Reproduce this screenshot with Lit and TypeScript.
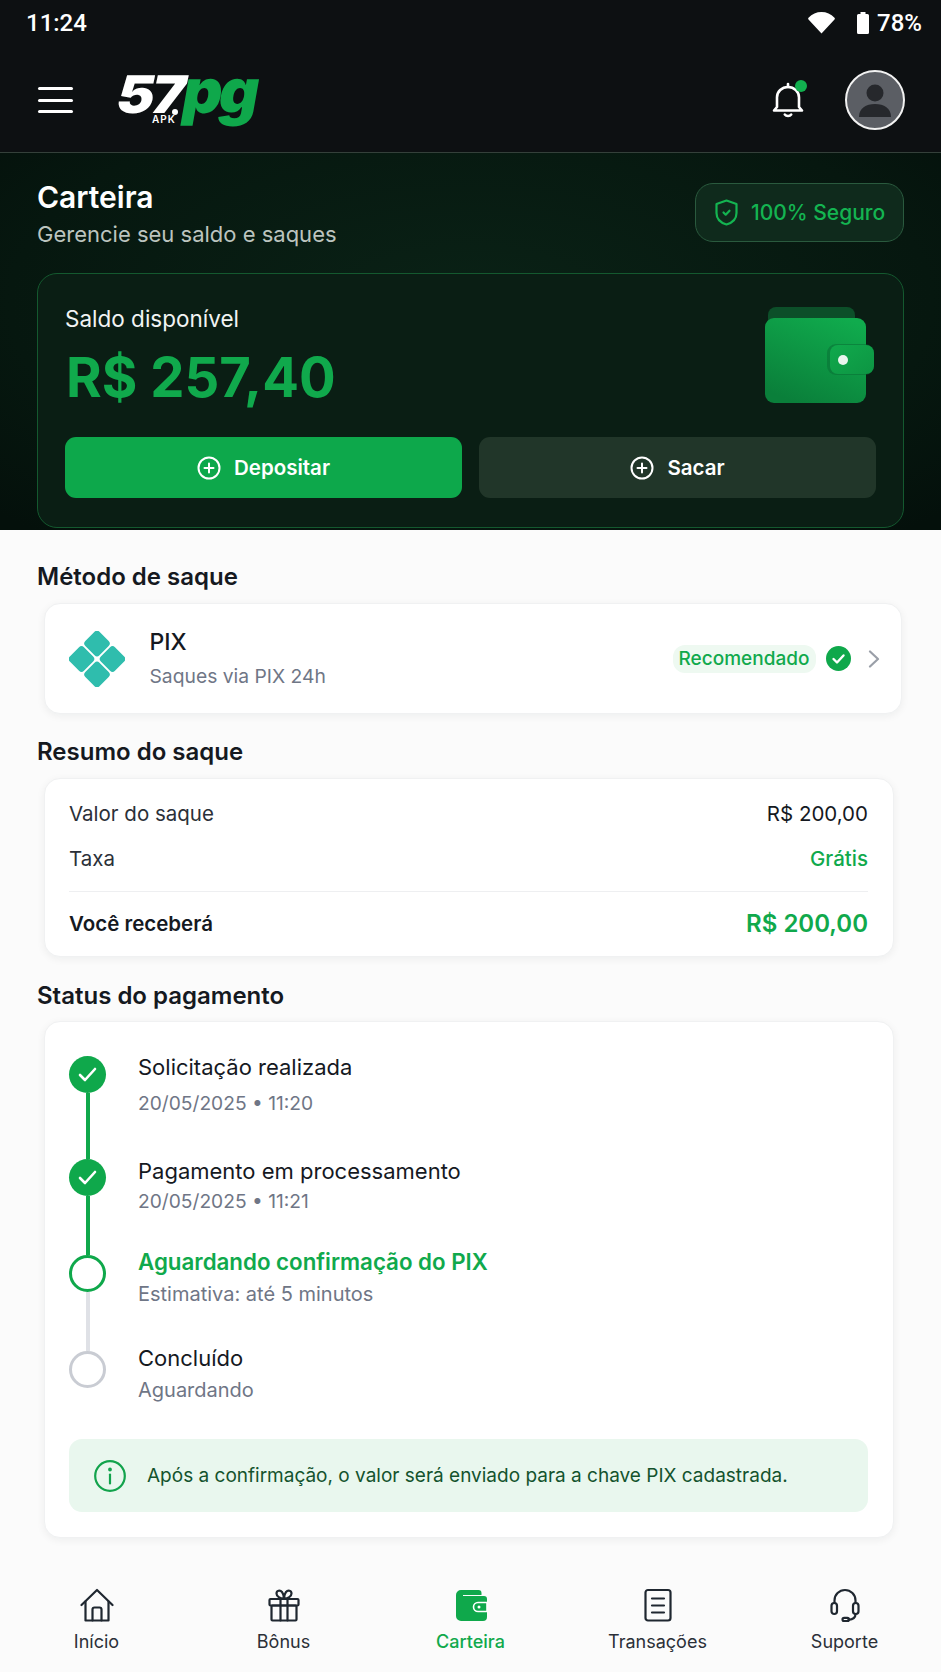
import { LitElement, html, css, svg } from "lit";
import { customElement } from "lit/decorators.js";

const steps = [
  { cls: "s1 done", title: "Solicitação realizada", sub: "20/05/2025 • 11:20" },
  { cls: "s2 done", title: "Pagamento em processamento", sub: "20/05/2025 • 11:21" },
  { cls: "s3 active", title: "Aguardando confirmação do PIX", sub: "Estimativa: até 5 minutos" },
  { cls: "s4 pending", title: "Concluído", sub: "Aguardando" },
];

const navIcons = {
  home: svg`<path d="M1.500 17 17 2l15.500 15" /><path d="M5.500 13.500V32.500h23V13.500" /><path d="M12.500 32.500V21.500a2 2 0 0 1 2-2h5a2 2 0 0 1 2 2v11" />`,
  gift: svg`<rect x="2.500" y="11" width="29" height="6.500" rx="1" /><rect x="4.500" y="17.500" width="25" height="15" rx="1" /><path d="M13.500 11v21.500M20.500 11v21.500" /><path d="M17 10.500C13 10.500 9.500 8.500 9.500 5.500 9.500 2.500 13 1.500 15 4c1.300 1.700 2 4 2 6.500ZM17 10.500c4 0 7.500-2 7.500-5 0-3-3.500-4-5.500-1.500-1.300 1.700-2 4-2 6.500Z" />`,
  doc: svg`<rect x="4.500" y="2" width="25" height="30.500" rx="2.500" /><path d="M11 10.500h12M11 17.500h12M11 24.500h12" />`,
  head: svg`<path d="M6.500 15v-2.500a10.500 10.500 0 0 1 21 0V15" /><rect x="3.500" y="15" width="5.500" height="11" rx="2.700" /><rect x="25" y="15" width="5.500" height="11" rx="2.700" /><path d="M27.500 26c0 3.500-2.500 5.500-7 5.800" /><rect x="14.500" y="29.800" width="6.500" height="3.400" rx="1.700" />`,
};

@customElement("app-root")
export class AppRoot extends LitElement {
  static styles = css`
    :host { display: block; width: 941px; height: 1672px; overflow: hidden; background: #fbfbfb; font-family: Inter, "Liberation Sans", sans-serif; color: #15191f; }
    * { box-sizing: border-box; }
    svg { display: block; flex: none; }

    .top { background: #0d1012; color: #fff; }
    .status { height: 48px; padding: 0 19px 2px 26px; display: flex; align-items: center; justify-content: space-between; font-family: Roboto, sans-serif; font-size: 24px; font-weight: 500; }
    .status-right { display: flex; align-items: center; gap: 8px; }
    .wifi { margin-right: 14px; }
    .header { height: 105px; border-bottom: 1px solid #34403a; padding: 0 36px 0 38px; display: flex; align-items: center; }
    .burger { width: 35px; display: flex; flex-direction: column; gap: 8.500px; }
    .burger i { display: block; height: 3px; border-radius: 2px; background: #fff; }
    .logo { margin-left: 39px; margin-bottom: 18px; width: 146px; height: 50px; display: flex; align-items: baseline; position: relative; font-family: Inter, sans-serif; font-weight: 900; line-height: 50px; }
    .logo-57 { display: block; width: 67px; color: #fff; font-size: 52px; letter-spacing: -3px; transform-origin: 0 100%; transform: skewX(-12deg) scaleX(1.1); }
    .logo-pg { display: block; color: #0fa84b; font-size: 62px; letter-spacing: -3.500px; transform-origin: 0 100%; transform: skewX(-10deg); }
    .logo-apk { position: absolute; left: 40px; top: 47px; font-size: 10px; font-weight: 600; letter-spacing: 1px; line-height: 12px; color: #fff; }
    .logo-mark { position: absolute; left: 60px; top: 43px; width: 6px; height: 6px; border-radius: 50%; background: #fff; }
    .spacer { flex: 1; }
    .bell { position: relative; margin-right: 41px; }
    .bell-dot { position: absolute; right: -3px; top: -2px; width: 12px; height: 12px; border-radius: 50%; background: #12b04f; }
    .avatar { width: 60px; height: 60px; border-radius: 50%; background: #5b5e64; border: 2px solid #f2f2f2; overflow: hidden; }

    .hero { height: 377px; padding: 0 37px; background: radial-gradient(ellipse 70% 80% at 50% 40%, #0a2216 0%, #06170f 70%, #04100b 100%); color: #fff; }
    .hero-head { height: 120px; padding-top: 25px; display: flex; justify-content: space-between; align-items: flex-start; }
    .hero-title { font-size: 30px; font-weight: 600; line-height: 38px; }
    .hero-sub { font-size: 22px; line-height: 28px; margin-top: 4px; color: #bcc4bf; }
    .secure { width: 209px; height: 59px; margin-top: 5px; padding-left: 19px; border: 1px solid #2a5a3e; border-radius: 18px; background: #0f2a1c; display: flex; align-items: center; gap: 13px; color: #14b451; font-size: 21px; font-weight: 500; }
    .wallet-card { height: 255px; border: 1px solid #14592f; border-radius: 20px; background: #0a1e14; padding: 31px 27px 0; }
    .balance-row { height: 132px; display: flex; justify-content: space-between; align-items: flex-start; }
    .balance-label { font-size: 22.500px; line-height: 28px; color: #f2f4f3; }
    .balance { margin-top: 12px; font-size: 54.400px; line-height: 64px; font-weight: 700; color: #10a94c; padding-left: 1px; }
    .wallet-art { margin-right: 2px; margin-top: 2px; }
    .btns { display: grid; grid-template-columns: 1fr 1fr; gap: 17px; }
    .btn { height: 61px; border-radius: 11px; display: flex; align-items: center; justify-content: center; gap: 13px; font-size: 20.500px; font-weight: 600; color: #fff; }
    .btn.primary { background: #0da84b; }
    .btn.secondary { background: #213629; }

    .sec-title { height: 28px; padding-left: 37px; font-size: 24px; font-weight: 600; line-height: 28px; color: #15191f; }
    .t1 { margin-top: 33px; }
    .t2 { margin-top: 24px; }
    .t3 { margin-top: 25px; }
    .card { margin-top: 12px; margin-left: 43.500px; width: 850px; background: #fff; border: 1px solid #f0f1f2; border-radius: 16px; box-shadow: 0 2px 8px rgba(20,30,40,.06); }
    .method { width: 858px; height: 111px; padding: 0 21px 0 24px; display: flex; align-items: center; }
    .method-text { margin-left: 25px; flex: 1; }
    .method-name { font-size: 23px; font-weight: 500; line-height: 28px; }
    .method-sub { font-size: 19.300px; line-height: 26px; margin-top: 7px; color: #6f7686; }
    .rec { height: 28px; width: 143px; margin-right: 10px; border-radius: 12px; background: #eef9f1; color: #10a94c; font-size: 19px; font-weight: 500; display: flex; align-items: center; justify-content: center; }
    .chev { margin-left: 17px; }

    .summary { height: 179px; padding: 20px 24.500px 0; }
    .row { display: flex; justify-content: space-between; align-items: center; height: 28px; font-size: 20.500px; color: #2b3038; }
    .row + .row { margin-top: 17px; }
    .val { color: #15191f; }
    .green { color: #10a94c; font-weight: 500; }
    .divider { height: 1px; background: #eeeff1; margin-top: 19px; }
    .total { display: flex; justify-content: space-between; align-items: center; height: 32px; margin-top: 15px; font-size: 20.500px; font-weight: 600; color: #15191f; }
    .total-val { font-size: 24px; font-weight: 600; color: #10a94c; }

    .timeline { margin-top: 11px; height: 517px; padding: 33.500px 24.500px 0; }
    .step { display: flex; }
    .s1 { height: 103px; }
    .s2 { height: 96px; }
    .s3 { height: 96px; }
    .s4 { height: 88.500px; }
    .marker { width: 37px; display: flex; flex-direction: column; align-items: center; }
    .dot { width: 37px; height: 37px; border-radius: 50%; flex: none; display: flex; align-items: center; justify-content: center; }
    .done .dot { background: #0fa84b; }
    .active .dot { border: 3px solid #0fa84b; background: #fff; }
    .pending .dot { border: 3px solid #c9ccd3; background: #fff; }
    .line { width: 4px; flex: 1; background: #0fa84b; }
    .active .line { background: #dfe1e6; }
    .step-text { margin-left: 32px; }
    .s1 .step-text { margin-top: -4px; }
    .s2 .step-text { margin-top: -3px; }
    .s3 .step-text, .s4 .step-text { margin-top: -8px; }
    .step-title { font-size: 22px; line-height: 30px; font-weight: 400; color: #15191f; }
    .active .step-title { color: #10a94c; font-weight: 600; font-size: 22.300px; }
    .step-sub { font-size: 20px; line-height: 26px; margin-top: 4px; color: #6f7686; }
    .s1 .step-sub { font-size: 19.200px; margin-top: 8px; }
    .s2 .step-sub { font-size: 19.200px; margin-top: 2px; }
    .info { height: 73px; border-radius: 13px; background: #e9f7ee; padding-left: 25px; display: flex; align-items: center; gap: 21px; font-size: 19px; color: #14532d; }

    .nav { margin-top: 50px; padding: 0 3px; display: grid; grid-template-columns: repeat(5, 1fr); }
    .nav-item { display: flex; flex-direction: column; align-items: center; gap: 8px; font-size: 18px; line-height: 24px; color: #2b3038; }
    .nav-item svg { fill: none; stroke: #1f2730; stroke-width: 2.200; stroke-linecap: round; stroke-linejoin: round; }
    .nav-item.on { color: #10a94c; font-weight: 500; }
    .nav-item.on svg { stroke: none; }
  `;

  private navItem(icon: unknown, label: string, on = false) {
    return html`<div class="nav-item ${on ? "on" : ""}">
      <svg width="34" height="34" viewBox="0 0 34 34">${icon}</svg>
      <span>${label}</span>
    </div>`;
  }

  private plus() {
    return html`<svg width="24" height="24" viewBox="0 0 24 24" fill="none" stroke="#fff" stroke-width="2" stroke-linecap="round"><circle cx="12" cy="12" r="10.500"/><path d="M12 7.500v9M7.500 12h9"/></svg>`;
  }

  render() {
    return html`
      <div class="top">
        <div class="status">
          <span>11:24</span>
          <div class="status-right">
            <svg class="wifi" width="27" height="22" viewBox="0 0 27 22"><path d="M13.500 21.500 0.500 7.500C0 7 0 6.300 0.500 5.800 4 2 8.500 0 13.500 0s9.500 2 13 5.800C27 6.300 27 7 26.500 7.500Z" fill="#fff"/></svg>
            <svg width="12" height="22" viewBox="0 0 12 22"><path d="M3.500 0h5v2h2A1.500 1.500 0 0 1 12 3.500V20.500A1.500 1.500 0 0 1 10.500 22h-9A1.500 1.500 0 0 1 0 20.500V3.500A1.500 1.500 0 0 1 1.500 2h2Z" fill="#fff"/></svg>
            <span>78%</span>
          </div>
        </div>
        <div class="header">
          <div class="burger"><i></i><i></i><i></i></div>
          <div class="logo">
            <span class="logo-57">57</span><span class="logo-pg">pg</span>
            <span class="logo-mark"></span>
            <span class="logo-apk">APK</span>
          </div>
          <div class="spacer"></div>
          <div class="bell">
            <svg width="32" height="36" viewBox="0 0 32 36" fill="none" stroke="#fff" stroke-width="2.600" stroke-linecap="round" stroke-linejoin="round">
              <path d="M5 25V15.500C5 9.500 9.800 5 16 5s11 4.500 11 10.500V25l3 3.500H2Z"/><path d="M16 2v3"/><path d="M12.800 32.500c1.500 2 5 2 6.400 0"/>
            </svg>
            <span class="bell-dot"></span>
          </div>
          <div class="avatar">
            <svg width="56" height="56" viewBox="0 0 56 56" fill="#26282c"><circle cx="28" cy="21" r="8.500"/><path d="M12 45c0-9 7-13 16-13s16 4 16 13Z"/></svg>
          </div>
        </div>
      </div>

      <section class="hero">
        <div class="hero-head">
          <div>
            <div class="hero-title">Carteira</div>
            <div class="hero-sub">Gerencie seu saldo e saques</div>
          </div>
          <div class="secure">
            <svg width="23" height="27" viewBox="0 0 23 27" fill="none" stroke="#14b451" stroke-width="2.200" stroke-linecap="round" stroke-linejoin="round">
              <path d="M11.500 1.500 21.500 5v9c0 6-4.200 9.800-10 11.500C5.700 23.800 1.500 20 1.500 14V5Z"/><path d="m8.500 13.500 2.200 2.200 3.800-4"/>
            </svg>
            <span>100% Seguro</span>
          </div>
        </div>
        <div class="wallet-card">
          <div class="balance-row">
            <div>
              <div class="balance-label">Saldo disponível</div>
              <div class="balance">R$ 257,40</div>
            </div>
            <svg class="wallet-art" width="109" height="96" viewBox="0 0 109 96">
              <defs>
                <linearGradient id="wg" x1="0.800" y1="0" x2="0.300" y2="1"><stop offset="0" stop-color="#10ab4d"/><stop offset="1" stop-color="#0a7f3a"/></linearGradient>
                <linearGradient id="cg" x1="0" y1="0" x2="1" y2="1"><stop offset="0" stop-color="#10a94c"/><stop offset="1" stop-color="#0d9543"/></linearGradient>
              </defs>
              <rect x="3" y="0" width="87" height="30" rx="8" fill="#0c4f29"/>
              <rect x="0" y="11" width="101" height="85" rx="9" fill="url(#wg)"/>
              <rect x="62" y="37" width="47" height="31" rx="9" fill="#0a6f34" opacity="0.55"/>
              <rect x="65" y="38" width="44" height="29" rx="8" fill="url(#cg)"/>
              <circle cx="78" cy="53" r="5" fill="#e9f5ee"/>
            </svg>
          </div>
          <div class="btns">
            <div class="btn primary">
              ${this.plus()}
              <span>Depositar</span>
            </div>
            <div class="btn secondary">
              ${this.plus()}
              <span>Sacar</span>
            </div>
          </div>
        </div>
      </section>

      <div class="sec-title t1">Método de saque</div>
      <div class="card method">
        <svg width="56" height="56" viewBox="0 0 56 56" fill="#2fbdad">
          <rect x="18" y="2.500" width="20" height="20" rx="3.500" transform="rotate(45 28 12.500)"/>
          <rect x="18" y="33.500" width="20" height="20" rx="3.500" transform="rotate(45 28 43.500)"/>
          <rect x="2.500" y="18" width="20" height="20" rx="3.500" transform="rotate(45 12.500 28)"/>
          <rect x="33.500" y="18" width="20" height="20" rx="3.500" transform="rotate(45 43.500 28)"/>
        </svg>
        <div class="method-text">
          <div class="method-name">PIX</div>
          <div class="method-sub">Saques via PIX 24h</div>
        </div>
        <div class="rec">Recomendado</div>
        <svg width="25" height="25" viewBox="0 0 25 25"><circle cx="12.500" cy="12.500" r="12.500" fill="#0fa84b"/><path d="m7.500 13 3.500 3.500 6.500-7" fill="none" stroke="#fff" stroke-width="2.400" stroke-linecap="round" stroke-linejoin="round"/></svg>
        <svg class="chev" width="12" height="18" viewBox="0 0 12 18"><path d="m2 1.500 8 7.500-8 7.500" fill="none" stroke="#9a9fa8" stroke-width="2.200" stroke-linecap="round" stroke-linejoin="round"/></svg>
      </div>

      <div class="sec-title t2">Resumo do saque</div>
      <div class="card summary">
        <div class="row"><span>Valor do saque</span><span class="val">R$ 200,00</span></div>
        <div class="row"><span>Taxa</span><span class="green">Grátis</span></div>
        <div class="divider"></div>
        <div class="total"><span>Você receberá</span><span class="total-val">R$ 200,00</span></div>
      </div>

      <div class="sec-title t3">Status do pagamento</div>
      <div class="card timeline">
        ${steps.map(
          (s, i) => html`<div class="step ${s.cls}">
            <div class="marker">
              <div class="dot">
                ${s.cls.includes("done")
                  ? html`<svg width="19" height="15" viewBox="0 0 19 15"><path d="m2 8 5 5 10-11" fill="none" stroke="#fff" stroke-width="2.600" stroke-linecap="round" stroke-linejoin="round"/></svg>`
                  : ""}
              </div>
              ${i < steps.length - 1 ? html`<div class="line"></div>` : ""}
            </div>
            <div class="step-text">
              <div class="step-title">${s.title}</div>
              <div class="step-sub">${s.sub}</div>
            </div>
          </div>`
        )}
        <div class="info">
          <svg width="32" height="32" viewBox="0 0 32 32" fill="none" stroke="#12a34c" stroke-width="2.200" stroke-linecap="round"><circle cx="16" cy="16" r="14.800"/><path d="M16 14.500v9"/><circle cx="16" cy="9.500" r="0.800" fill="#12a34c"/></svg>
          <span>Após a confirmação, o valor será enviado para a chave PIX cadastrada.</span>
        </div>
      </div>

      <nav class="nav">
        ${this.navItem(navIcons.home, "Início")}
        ${this.navItem(navIcons.gift, "Bônus")}
        ${this.navItem(
          svg`<path d="M2 7a5 5 0 0 1 5-5h17.500a3 3 0 0 1 3 3v2H9v1h21a3 3 0 0 1 3 3v18a4 4 0 0 1-4 4H7a5 5 0 0 1-5-5V7Z" fill="#0fa84b"/><path d="M24 14.500h9v9h-9a4.500 4.500 0 0 1 0-9Z" fill="#0fa84b" stroke="#fff" stroke-width="1.600"/><circle cx="25" cy="19" r="1.500" fill="#fff"/>`,
          "Carteira",
          true
        )}
        ${this.navItem(navIcons.doc, "Transações")}
        ${this.navItem(navIcons.head, "Suporte")}
      </nav>
    `;
  }
}
